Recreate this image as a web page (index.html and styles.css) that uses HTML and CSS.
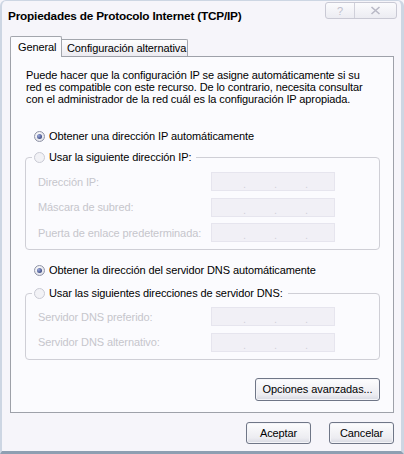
FILE: index.html
```html
<!DOCTYPE html>
<html>
<head>
    <title>Propiedades de Protocolo Internet (TCP/IP)</title>
    <meta charset="utf-8">
    <link rel="stylesheet" href="styles.css">
</head>
<body>
    <div class="window">
        <div class="titlebar">
            <span class="title">Propiedades de Protocolo Internet (TCP/IP)</span>
            <div class="caption-btns">
                <span class="cbtn help">?</span>
                <span class="cbtn close">
                    <svg width="11" height="9" viewBox="0 0 11 9"><path d="M1.5 1 L9.5 8 M9.5 1 L1.5 8" stroke="#b9b9c6" stroke-width="1.6" fill="none"/></svg>
                </span>
            </div>
        </div>

        <div class="tabs">
            <div class="tab active">General</div>
            <div class="tab">Configuración alternativa</div>
        </div>

        <div class="panel">
            <p class="intro">Puede hacer que la configuración IP se asigne automáticamente si su<br>red es compatible con este recurso. De lo contrario, necesita consultar<br>con el administrador de la red cuál es la configuración IP apropiada.</p>

            <label class="radio first"><span class="dot on"></span>Obtener una dirección IP automáticamente</label>
            <fieldset class="group">
                <legend class="radio"><span class="dot"></span>Usar la siguiente dirección IP:</legend>
                <div class="field"><span>Dirección IP:</span><span class="ip"><i>.</i><i>.</i><i>.</i></span></div>
                <div class="field"><span>Máscara de subred:</span><span class="ip"><i>.</i><i>.</i><i>.</i></span></div>
                <div class="field"><span>Puerta de enlace predeterminada:</span><span class="ip"><i>.</i><i>.</i><i>.</i></span></div>
            </fieldset>

            <label class="radio second"><span class="dot on"></span>Obtener la dirección del servidor DNS automáticamente</label>
            <fieldset class="group dns">
                <legend class="radio"><span class="dot"></span>Usar las siguientes direcciones de servidor DNS:</legend>
                <div class="field"><span>Servidor DNS preferido:</span><span class="ip"><i>.</i><i>.</i><i>.</i></span></div>
                <div class="field"><span>Servidor DNS alternativo:</span><span class="ip"><i>.</i><i>.</i><i>.</i></span></div>
            </fieldset>

            <div class="advanced">
                <button class="btn wide">Opciones avanzadas...</button>
            </div>
        </div>

        <div class="footer">
            <button class="btn">Aceptar</button>
            <button class="btn">Cancelar</button>
        </div>
    </div>
</body>
</html>
```

FILE: styles.css
```css
body {
    margin: 0;
    background: #f6f5fa;
    font-family: "Liberation Sans", Arial, sans-serif;
    font-size: 11px;
    letter-spacing: -0.1px;
    color: #000;
}
.window {
    width: 404px;
    height: 454px;
    box-sizing: border-box;
    border: 1px solid #cdd6e3;
    border-left-width: 2px;
    border-right-width: 3px;
    border-bottom: 3px solid #8e9fb2;
    border-radius: 6px 6px 0 0;
    background: #f6f5fa;
}
.titlebar {
    height: 30px;
    display: flex;
    align-items: center;
    padding-left: 6px;
}
.title {
    font-weight: bold;
    font-size: 11.8px;
    letter-spacing: -0.2px;
}
.caption-btns {
    margin-left: auto;
    margin-right: 4px;
    align-self: flex-start;
    margin-top: 1px;
    display: flex;
    height: 15px;
    border: 1px solid #c9c9d4;
    border-radius: 3px;
    background: linear-gradient(#fbfbfd, #ececf2);
}
.cbtn {
    display: flex;
    align-items: center;
    justify-content: center;
    color: #c0c0cc;
    font-size: 11px;
}
.help {
    width: 28px;
}
.close {
    width: 41px;
    border-left: 1px solid #d0d0da;
}
.tabs {
    height: 25px;
    margin-left: 8px;
    display: flex;
    align-items: flex-end;
}
.tab {
    box-sizing: border-box;
    width: 126px;
    height: 17px;
    line-height: 16px;
    padding: 0 0 0 5px;
    white-space: nowrap;
    border: 1px solid #a3a6ad;
    border-bottom: none;
    border-left: none;
    border-radius: 0 2px 0 0;
    background: linear-gradient(#fdfdfe, #ecebf1);
}
.tab.active {
    position: relative;
    z-index: 1;
    width: 52px;
    height: 21px;
    line-height: 20px;
    margin-bottom: -1px;
    padding: 0 0 0 7px;
    border-left: 1px solid #a3a6ad;
    border-radius: 2px 2px 0 0;
    background: #fbfbfe;
}
.panel {
    height: 357px;
    box-sizing: border-box;
    margin: 0 7px 0 8px;
    border: 1px solid #9ea1a9;
    background: #fbfbfe;
    padding: 12px 13px 0 14px;
}
.intro {
    margin: 0 0 0 1px;
    line-height: 12px;
}
.radio {
    display: flex;
    align-items: center;
    gap: 4px;
    height: 16px;
}
.radio.first {
    margin-top: 23px;
    padding-left: 9px;
}
.radio.second {
    margin-top: 12px;
    padding-left: 9px;
}
.dot {
    width: 11px;
    height: 11px;
    box-sizing: border-box;
    border-radius: 50%;
    border: 1px solid #c9cad4;
    background: #f2f2f6;
    position: relative;
}
.dot.on {
    border-color: #8f93a6;
    background: radial-gradient(circle at 40% 35%, #ffffff, #d9dae3);
}
.dot.on::after {
    content: '';
    position: absolute;
    left: 2px;
    top: 2px;
    width: 5px;
    height: 5px;
    border-radius: 50%;
    background: radial-gradient(circle at 35% 35%, #9aa8dc, #1d2a62);
}
.group {
    margin: 5px 0 0 0;
    padding: 7px 0 7px 6px;
    border: 1px solid #cfcfd6;
    border-radius: 4px;
}
.group.dns {
    margin-top: 7px;
    padding-top: 6px;
}
.group legend {
    padding: 0 5px 0 2px;
}
.field {
    display: grid;
    grid-template-columns: 173px 124px;
    align-items: center;
    height: 19px;
    padding-left: 6px;
    color: #c6c6cc;
}
.field + .field {
    margin-top: 6.5px;
}
.ip {
    height: 19px;
    box-sizing: border-box;
    border: 1px solid #e6e5ee;
    background: #f1f0f6;
    display: flex;
    align-items: flex-end;
    gap: 28px;
    padding-left: 31px;
}
.ip i {
    font-style: normal;
    color: #d2d2da;
    line-height: 12px;
}
.advanced {
    display: flex;
    justify-content: flex-end;
    margin-top: 18px;
}
.btn {
    width: 65px;
    height: 22px;
    border: 1px solid #6f7687;
    border-radius: 3px;
    background: linear-gradient(#fdfdfe, #ececf1 75%, #d7d9e2);
    box-shadow: inset 0 0 0 1px #f4f4f8;
    font-family: "Liberation Sans", Arial, sans-serif;
    font-size: 11px;
    letter-spacing: -0.1px;
    color: #000;
    padding: 0;
}
.btn.wide {
    width: 125px;
    height: 23px;
}
.footer {
    display: flex;
    justify-content: flex-end;
    gap: 18px;
    padding: 9px 7px 0 0;
}
```
